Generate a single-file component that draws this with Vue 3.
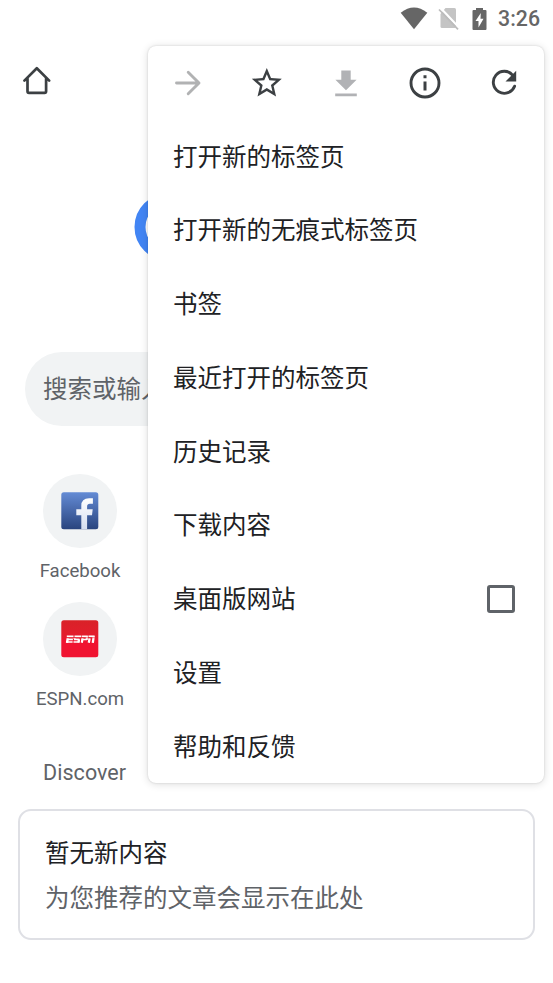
<script setup>
const items = [
  { label: '打开新的标签页' },
  { label: '打开新的无痕式标签页' },
  { label: '书签' },
  { label: '最近打开的标签页' },
  { label: '历史记录' },
  { label: '下载内容' },
  { label: '桌面版网站', checkbox: true },
  { label: '设置' },
  { label: '帮助和反馈' },
]
</script>

<template>
  <div class="screen">
    <header class="status">
      <svg class="wifi" width="28" height="24" viewBox="0 0 28 24"><path d="M.7 5.8Q14-4.6 27.3 5.8L14 22.2Z" fill="#666" /></svg>
      <svg class="sim" width="22" height="24" viewBox="0 0 22 24">
        <path d="M7.500 1H16.500q1.500 0 1.500 1.500v17q0 1.500-1.500 1.500H4q-1.500 0-1.500-1.500V7Z" fill="#c4c4c4" />
        <path d="M2.800 1.200 21.500 21" stroke="#fff" stroke-width="2.200" />
        <path d="M1 2.500 20 22.300" stroke="#bcbcbc" stroke-width="1.700" />
      </svg>
      <svg class="battery" width="15" height="24" viewBox="0 0 15 24">
        <path d="M4 1h7v2h2.500q1 0 1 1v18q0 1-1 1h-12q-1 0-1-1V4q0-1 1-1H4Z" fill="#666" />
        <path d="M8.800 6 3.500 14h3v6.500l5-8.800H8.500Z" fill="#fff" />
      </svg>
      <span class="clock">3:26</span>
    </header>

    <div class="toolbar">
      <svg width="30" height="30" viewBox="0 0 30 30" fill="none" stroke="#3c4043" stroke-width="2.700" stroke-linecap="round" stroke-linejoin="round">
        <path d="M2.400 14.600 14.800 2.200 27.200 14.600M5.500 12.200V25.300q0 1.500 1.500 1.500h15.600q1.500 0 1.500-1.500V12.200" />
      </svg>
    </div>

    <div class="brand">
      <svg width="68" height="68" viewBox="0 0 68 68"><circle cx="34" cy="34" r="28" fill="none" stroke="#4285f4" stroke-width="11" /></svg>
    </div>

    <div class="search">搜索或输入</div>

    <div class="sites">
      <div class="site">
        <div class="disc">
          <svg width="38" height="38" viewBox="0 0 38 38">
            <defs>
              <linearGradient id="fb" x1="0" y1="0" x2="0" y2="1"><stop offset="0" stop-color="#648bd5" /><stop offset="1" stop-color="#29447e" /></linearGradient>
              <linearGradient id="ff" x1="0" y1="0" x2="0" y2="1"><stop offset="0" stop-color="#fff" /><stop offset="1" stop-color="#d5def0" /></linearGradient>
            </defs>
            <rect x=".3" y=".3" width="37" height="37" rx="2.500" fill="url(#fb)" />
            <path d="M20.300 37.300V23.200h-5v-5.900h5v-3.500q0-7.600 7.800-7.600h3.800v5.600h-3q-2.800 0-2.800 2.700v2.800h5.600l-.7 5.900h-4.900v14.100Z" fill="url(#ff)" />
          </svg>
        </div>
        <span class="name">Facebook</span>
      </div>
      <div class="site">
        <div class="disc">
          <svg width="38" height="38" viewBox="0 0 38 38">
            <defs><linearGradient id="es" x1="0" y1="0" x2="0" y2="1"><stop offset="0" stop-color="#d92228" /><stop offset=".45" stop-color="#e41d2d" /><stop offset=".55" stop-color="#f01331" /><stop offset="1" stop-color="#f01331" /></linearGradient></defs>
            <rect x=".3" y=".3" width="37" height="37" rx="2.500" fill="url(#es)" />
            <g fill="none" stroke="#fff" stroke-width="1.700">
              <path d="M5.800 16.300H12.500M6 19.300H11.900M5 22H11.600" />
              <path d="M6.800 18.300 6 22.800M13.800 18.300 13.600 19.300M18 19.300 17.500 22.500" stroke-width="2.400" />
              <path d="M20 16.300H13.500M13 19.300H18.500M18.300 22H12.500" />
              <path d="M20.600 16.300H26.800M26 19.500H20.500" />
              <path d="M21.600 18.300 20.800 22.800M26 16.300 25.700 19.800" stroke-width="2.200" />
              <path d="M27.500 16.300H33.600" />
              <path d="M28.600 18.300 27.800 22.800M32.700 16.300 31.800 22.800" stroke-width="2.300" />
            </g>
            <path d="M5 17.700H34" stroke="#e92838" stroke-width=".6" />
          </svg>
        </div>
        <span class="name">ESPN.com</span>
      </div>
    </div>

    <div class="feed-head"><span>Discover</span></div>

    <section class="card">
      <div class="title">暂无新内容</div>
      <div class="desc">为您推荐的文章会显示在此处</div>
    </section>

    <nav class="menu">
      <div class="actions">
        <svg viewBox="0 0 36 36"><path d="M6.500 18H28M18.200 7.200 29 18 18.200 28.800" fill="none" stroke="#b1b2b3" stroke-width="2.900" stroke-linecap="round" stroke-linejoin="round" /></svg>
        <svg viewBox="0 0 36 36"><path transform="translate(-.2 0) scale(1.500)" d="M22 9.240l-7.190-.62L12 2 9.190 8.630 2 9.240l5.460 4.730L5.820 21 12 17.270 18.180 21l-1.630-7.030L22 9.240zM12 15.400l-3.760 2.270 1-4.280-3.320-2.880 4.380-.38L12 6.100l1.710 4.040 4.380.38-3.320 2.880 1 4.280L12 15.400z" fill="#3c4043" /></svg>
        <svg viewBox="0 0 36 36"><path d="M13.300 5.500h9.400v9.200h5.900L18 25.300 7.400 14.700h5.900ZM7.200 28.400h21.600v2.900H7.200Z" fill="#b1b2b5" /></svg>
        <svg viewBox="0 0 36 36"><circle cx="18" cy="18" r="14" fill="none" stroke="#3c4043" stroke-width="2.900" /><path d="M16.500 10.300h3v3h-3ZM16.500 16.500h3v9h-3Z" fill="#3c4043" /></svg>
        <svg viewBox="0 0 36 36"><path d="M26.800 10.300A11 11 0 1 0 28.600 21.200" fill="none" stroke="#3c4043" stroke-width="2.900" stroke-linecap="round" /><path d="M30.200 5.800V16.500H19.500Z" fill="#3c4043" /></svg>
      </div>
      <div v-for="item in items" :key="item.label" class="item">
        <span class="label">{{ item.label }}</span>
        <span v-if="item.checkbox" class="check"></span>
      </div>
    </nav>
  </div>
</template>

<style>
body { margin: 0; background: #fff; }
</style>

<style scoped>
.screen { position: relative; box-sizing: border-box; width: 553px; height: 983px; overflow: hidden; background: #fff; color: #202124; font-family: Roboto, "Noto Sans CJK SC", sans-serif; }
.status { display: flex; justify-content: flex-end; align-items: center; height: 37px; padding-right: 13px; }
.wifi { margin-right: 10px; }
.sim { margin-right: 12px; }
.battery { margin-right: 11px; }
.clock { font-size: 21.300px; font-weight: 500; color: #666; }
.toolbar { display: flex; align-items: center; box-sizing: border-box; height: 86px; padding: 1px 0 0 22px; }
.brand { display: flex; align-items: center; height: 68px; margin-top: 70px; padding-left: 134px; }
.search { display: flex; align-items: center; box-sizing: border-box; width: 503px; height: 74px; margin: 91px 25px 0; padding: 0 18px 3px; border-radius: 37px; background: #f1f3f4; color: #5f6368; font-size: 24.500px; white-space: nowrap; }
.sites { display: flex; flex-direction: column; width: 110px; margin: 48px 0 0 25px; }
.site { display: flex; flex-direction: column; align-items: center; height: 128px; }
.disc { display: flex; align-items: center; justify-content: center; width: 74px; height: 74px; border-radius: 50%; background: #f1f3f4; }
.name { margin-top: 11px; line-height: 24px; font-size: 18.600px; color: #5f6368; }
.feed-head { display: flex; align-items: center; height: 40px; margin-top: 22px; padding-left: 43px; font-size: 21.500px; letter-spacing: .05px; color: #5f6368; }
.card { box-sizing: border-box; height: 131px; margin: 17px 18px 0; padding: 20px 25px; border: 2px solid #dfe0e5; border-radius: 13px; font-size: 24.500px; }
.title { line-height: 45px; }
.desc { line-height: 46px; color: #5f6368; }
.menu { position: absolute; left: 148px; top: 45.500px; width: 396px; border-radius: 8px; background: #fff; box-shadow: 0 0 2px rgba(0,0,0,.16), 0 1px 9px rgba(0,0,0,.14); }
.actions { display: grid; grid-template-columns: repeat(5, 1fr); justify-items: center; align-items: center; box-sizing: border-box; height: 73.750px; padding-top: 1px; }
.actions svg { width: 36px; height: 36px; }
.item { display: flex; align-items: center; justify-content: space-between; height: 73.750px; padding: 0 29px 0 25px; font-size: 24.500px; line-height: 36px; }
.label { padding-top: 3px; }
.check { box-sizing: border-box; width: 28px; height: 28px; border: 3px solid #5f6368; border-radius: 3px; }
</style>
